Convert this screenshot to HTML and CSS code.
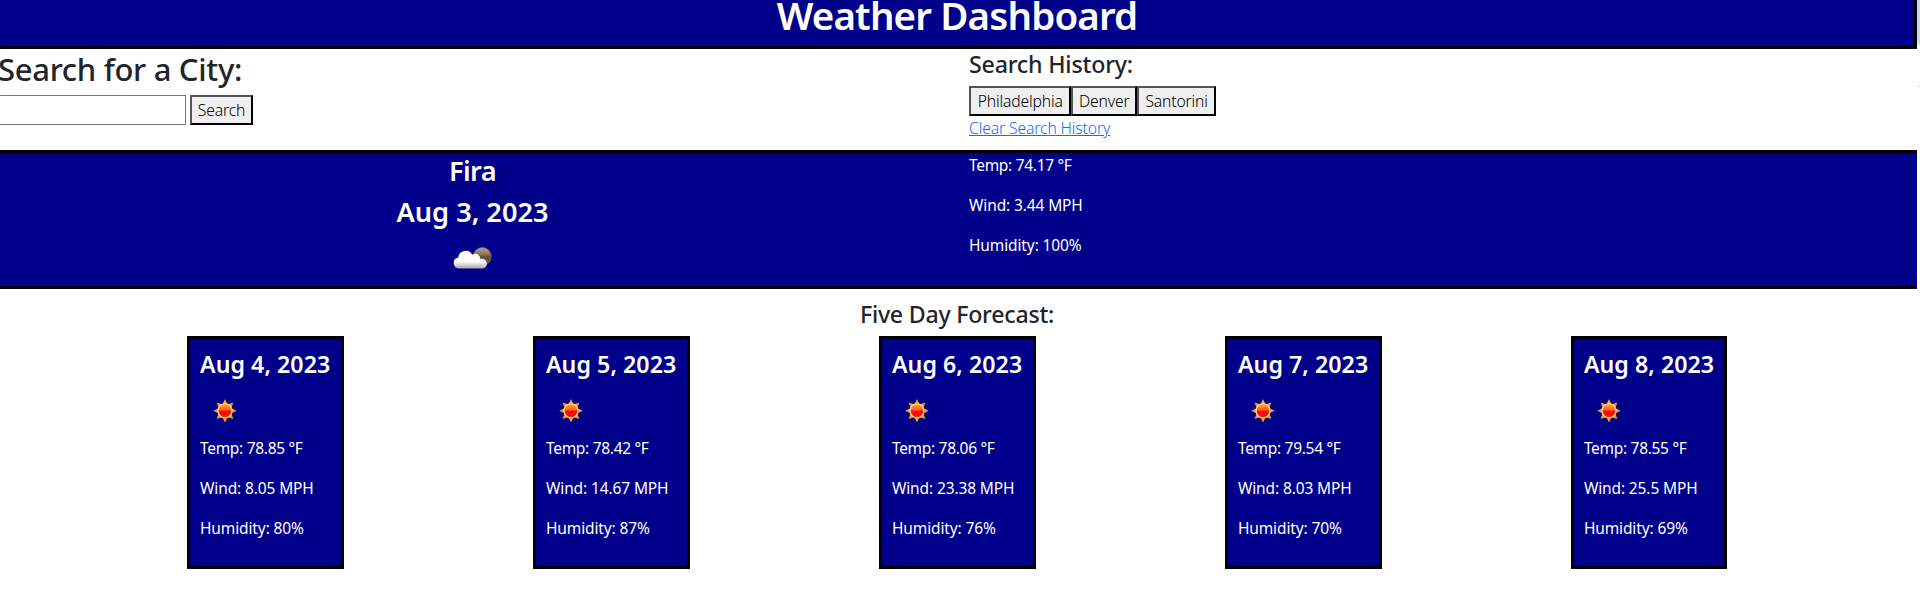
FILE: index.html
```
<!DOCTYPE html>
<html lang="en">
<head>
<meta charset="utf-8">
<title>Weather Dashboard</title>
<link rel="stylesheet" href="styles.css">
</head>
<body>
<svg width="0" height="0" class="defs" aria-hidden="true">
  <defs>
    <linearGradient id="core" x1="0" y1="0" x2="0" y2="1"><stop offset="0" stop-color="#ffa52c"/><stop offset=".42" stop-color="#ff6a14"/><stop offset=".55" stop-color="#fa0a00"/><stop offset="1" stop-color="#ff1000"/></linearGradient>
    <linearGradient id="cloud" x1="0" y1="0" x2="0" y2="1"><stop offset=".6" stop-color="#fff"/><stop offset="1" stop-color="#a8a8ac"/></linearGradient>
    <linearGradient id="moon" x1="0" y1="0" x2="0" y2="1"><stop offset="0" stop-color="#b5a291"/><stop offset=".4" stop-color="#8c7158"/><stop offset=".5" stop-color="#65503f"/><stop offset="1" stop-color="#6b543f"/></linearGradient>
    <symbol id="sun" viewBox="0 0 50 50">
      <path fill="#f5a01e" d="M25 13l3 6h-6zM25 36.500l3-6h-6zM13.300 24.700l6-3v6zM36.700 24.700l-6-3v6zM16.600 16.400l6.500 2.200-4.200 4.200zM33.400 16.400l-6.500 2.200 4.200 4.200zM16.600 33.100l6.500-2.200-4.200-4.200zM33.400 33.100l-6.500-2.200 4.200-4.200z"/>
      <circle cx="25" cy="24.700" r="6.900" fill="url(#core)" stroke="#ffd9a0" stroke-width="1.100"/>
    </symbol>
    <symbol id="cloudy" viewBox="0 0 50 50">
      <circle cx="34.300" cy="20.500" r="9" fill="url(#moon)" stroke="#8b7769" stroke-width=".6"/>
      <path fill="url(#cloud)" d="M10.800 32.500a5.500 5.500 0 0 1-.6-10.900A7.500 7.500 0 0 1 24.300 18.800a5 5 0 0 1 8 4.300 4.800 4.800 0 0 1 3.200 9.400z"/>
    </symbol>
  </defs>
</svg>
<div class="page">
  <main class="app">
    <header class="banner"><h1>Weather Dashboard</h1></header>
    <section class="search">
      <div class="search-form">
        <h2>Search for a City:</h2>
        <div class="field"><input type="text" aria-label="City"><button class="btn-search">Search</button></div>
      </div>
      <div class="history">
        <h4>Search History:</h4>
        <div class="history-list"><button class="btn-phl">Philadelphia</button><button class="btn-den">Denver</button><button class="btn-san">Santorini</button></div>
        <a href="#">Clear Search History</a>
      </div>
    </section>
    <section class="current">
      <div class="place">
        <h3 class="city">Fira</h3>
        <h3>Aug 3, 2023</h3>
        <svg class="icon"><use href="#cloudy"/></svg>
      </div>
      <div class="stats"><p class="temp">Temp: 74.17 °F</p><p>Wind: 3.44 MPH</p><p>Humidity: 100%</p></div>
    </section>
    <h4 class="forecast-title">Five Day Forecast:</h4>
    <section class="forecast">
      <article class="card"><h4>Aug 4, 2023</h4><svg class="icon"><use href="#sun"/></svg><p class="temp">Temp: 78.85 °F</p><p>Wind: 8.05 MPH</p><p>Humidity: 80%</p></article>
      <article class="card"><h4>Aug 5, 2023</h4><svg class="icon"><use href="#sun"/></svg><p class="temp">Temp: 78.42 °F</p><p>Wind: 14.67 MPH</p><p>Humidity: 87%</p></article>
      <article class="card"><h4>Aug 6, 2023</h4><svg class="icon"><use href="#sun"/></svg><p class="temp">Temp: 78.06 °F</p><p>Wind: 23.38 MPH</p><p>Humidity: 76%</p></article>
      <article class="card"><h4>Aug 7, 2023</h4><svg class="icon"><use href="#sun"/></svg><p class="temp">Temp: 79.54 °F</p><p>Wind: 8.03 MPH</p><p>Humidity: 70%</p></article>
      <article class="card"><h4>Aug 8, 2023</h4><svg class="icon"><use href="#sun"/></svg><p class="temp">Temp: 78.55 °F</p><p>Wind: 25.5 MPH</p><p>Humidity: 69%</p></article>
    </section>
  </main>
  <aside class="edge"><div class="edge-top"></div><div class="edge-line"></div></aside>
</div>
</body>
</html>
```
FILE: styles.css
```
* { box-sizing: border-box; }
body {
  margin: 0;
  background: #fff;
  color: #212529;
  font: 400 15.5px/24px "Noto Sans", "Open Sans", sans-serif;
  letter-spacing: -0.12px;
  overflow: hidden;
}
h1, h2, h3, h4, p { margin: 0; }
.defs { display: block; }
.page { display: flex; height: 610px; overflow: hidden; }
.app { width: 1917px; flex: none; }

.banner {
  display: flow-root;
  height: 49px;
  background: #00008b;
  border: solid #000;
  border-width: 0 3px 3px 0;
  color: #fff;
  text-align: center;
}
h1 { margin-top: -9px; font-size: 38.5px; line-height: 48px; font-weight: 600; letter-spacing: -0.85px; }

.search { display: flex; height: 101px; }
.search-form { width: 969px; overflow: hidden; }
h2 { margin-left: -2px; padding-top: 1px; font-size: 31px; line-height: 38.4px; font-weight: 500; letter-spacing: -0.3px; margin-bottom: 7px; }
.field { display: flex; gap: 4px; }
input { width: 190px; height: 30px; margin: 0 0 0 -4px; border: 1px solid #767676; background: #fff; }
h4 { padding-top: 1px; font-size: 23.2px; line-height: 28.8px; font-weight: 500; letter-spacing: -0.2px; margin-bottom: 7px; }
.history-list { display: flex; height: 30px; }
button {
  height: 30px;
  padding: 0;
  border: 2px outset #000;
  background: #efefef;
  color: #000;
  font: inherit;
  font-size: 15.7px;
  font-weight: 350;
  letter-spacing: -0.15px;
}
.btn-search { width: 63px; }
.btn-phl { width: 102.300px; }
.btn-den { width: 66px; }
.btn-san { width: 78.600px; }
.history a { display: block; color: #0d6efd; text-decoration: underline; font-weight: 350; font-size: 15.7px; letter-spacing: -0.12px; }

.current { display: flex; height: 139px; background: #00008b; border: solid #000; border-width: 3px 0; color: #fff; }
.place { width: 969px; padding-right: 24px; text-align: center; }
h3 { font-size: 27.2px; line-height: 33.6px; font-weight: 600; letter-spacing: 0; margin-bottom: 8px; }
.city { padding-top: 1px; margin-bottom: 7px; letter-spacing: -0.6px; }
.icon { display: block; width: 50px; height: 50px; }
.place .icon { margin: 0 auto; }
p { margin-bottom: 16px; }
.temp { letter-spacing: -0.3px; }

.forecast-title { margin-top: 10px; padding-right: 3px; text-align: center; letter-spacing: -0.25px; }
.forecast { display: flex; justify-content: space-between; padding: 0 189.500px 0 187px; }
.card { width: 156.600px; height: 233px; padding: 10px; background: #00008b; border: 3px solid #000; color: #fff; white-space: nowrap; }
.card h4 { font-weight: 600; letter-spacing: 0.05px; }

.edge { width: 3px; flex: none; }
.edge-top { height: 45px; background: #c9d7f8; border-radius: 0 0 0 3px; }
.edge-line { height: 42px; border-bottom: 1px solid #dcdcdc; }
```
